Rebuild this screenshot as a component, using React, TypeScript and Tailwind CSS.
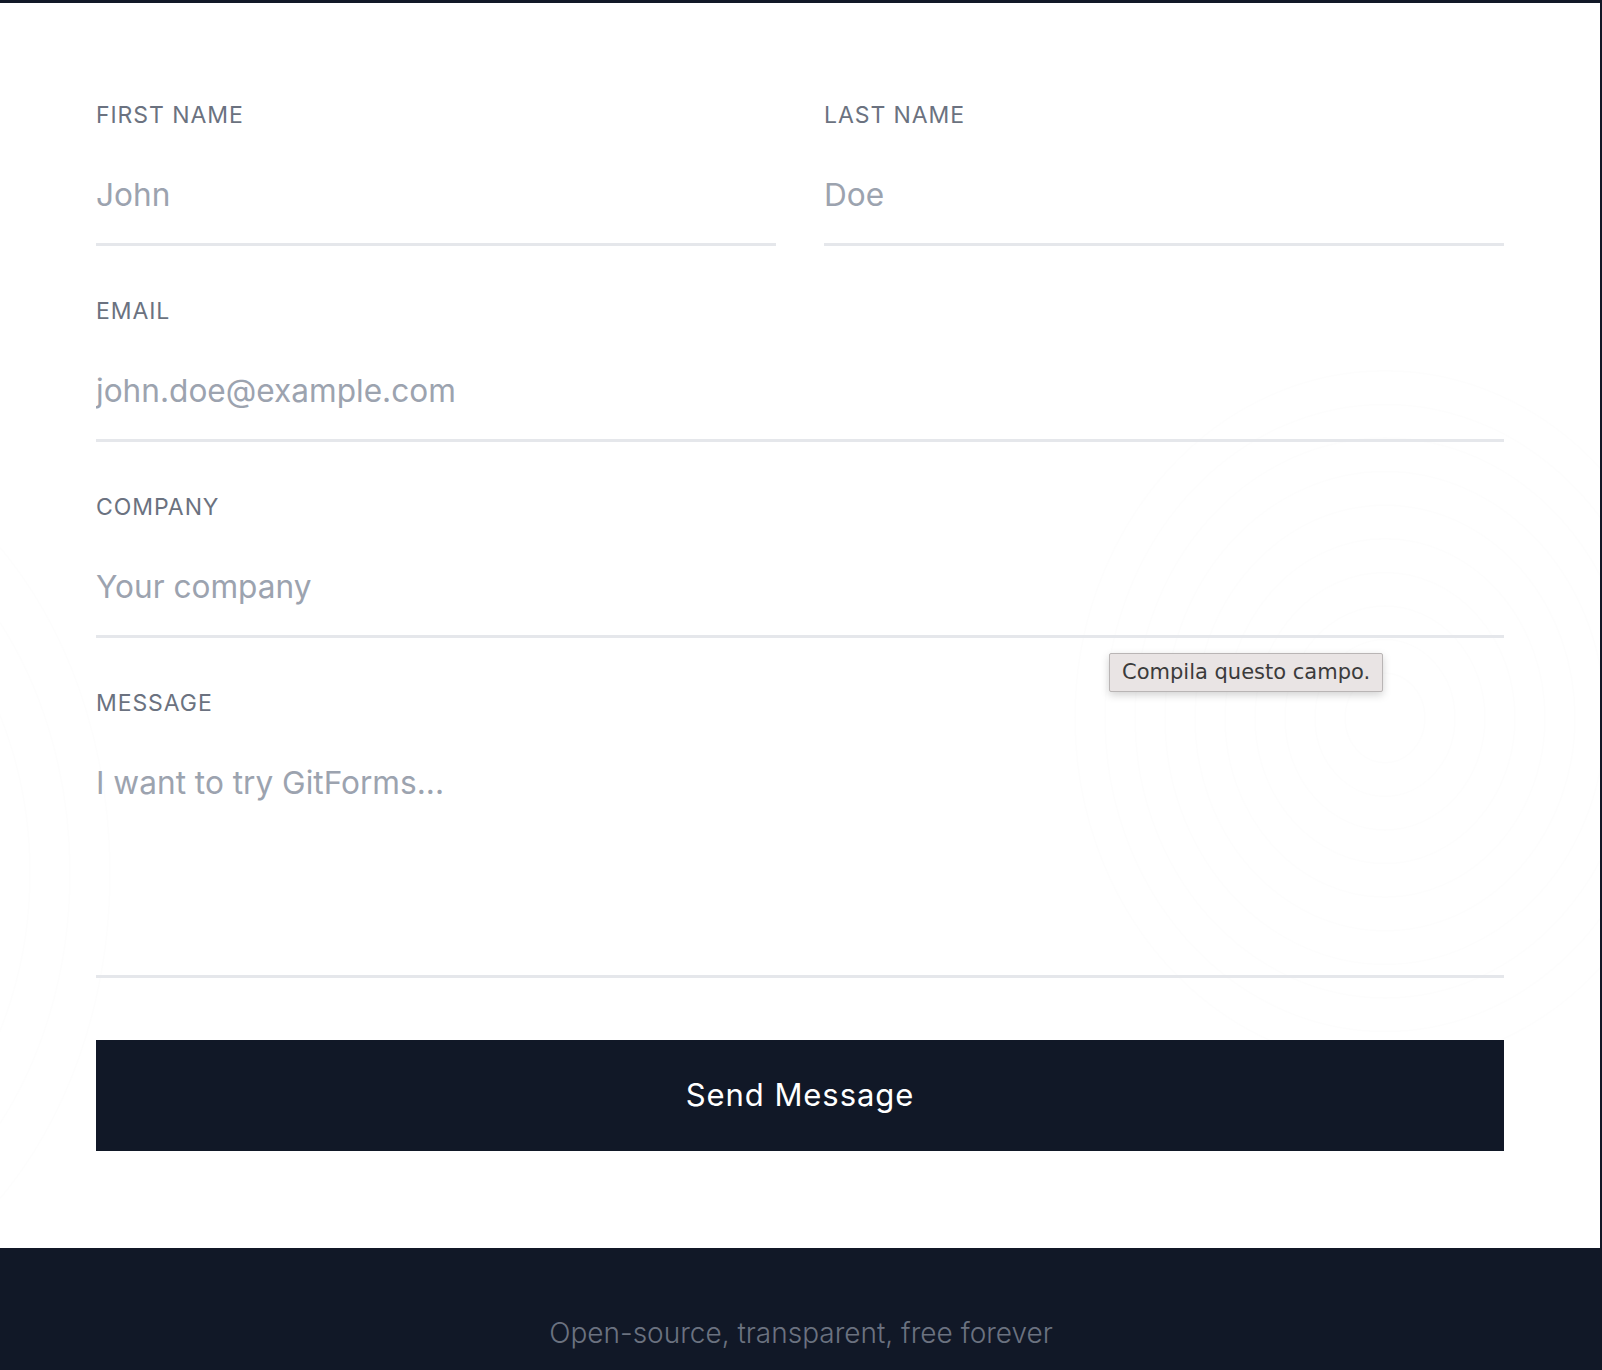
import React from "react";

const inter = { fontFamily: "Inter, 'Noto Sans', sans-serif" };

function Label({ children }: { children: React.ReactNode }) {
  return (
    <label className="block text-[23px] leading-[36px] uppercase tracking-[0.04em] text-[#6b7280]">
      {children}
    </label>
  );
}

function Field({
  label,
  placeholder,
  type = "text",
}: {
  label: string;
  placeholder: string;
  type?: string;
}) {
  return (
    <div>
      <Label>{label}</Label>
      <input
        type={type}
        placeholder={placeholder}
        className="mt-[13px] block h-[100px] w-full border-0 border-b-[3px] border-[#e5e7eb] bg-transparent p-0 text-[31.6px] text-gray-800 outline-none placeholder:text-[#9ca3af]"
      />
    </div>
  );
}

function Rings() {
  const radii = [40, 70, 100, 130, 160, 190, 220, 250, 280, 310];
  return (
    <svg
      className="pointer-events-none absolute inset-0 h-full w-full"
      viewBox="0 0 1600 1245"
      preserveAspectRatio="none"
    >
      <g fill="none" stroke="#000" strokeOpacity="0.007" strokeWidth="2">
        {radii.map((r) => (
          <ellipse key={r} cx={1385} cy={715} rx={r} ry={r * 1.12} />
        ))}
        {[220, 260, 300, 340].map((r) => (
          <ellipse key={"l" + r} cx={-230} cy={870} rx={r} ry={r * 1.3} />
        ))}
      </g>
    </svg>
  );
}

export default function App() {
  return (
    <div className="min-h-screen bg-white" style={inter}>
      <section className="relative border-t-[3px] border-r-2 border-[#111827] bg-white">
        <Rings />
        <form
          className="relative px-[96px] pt-[94px] pb-[97px]"
          onSubmit={(e) => e.preventDefault()}
        >
          <div className="flex flex-col gap-[47px]">
            <div className="grid grid-cols-2 gap-[48px]">
              <Field label="First name" placeholder="John" />
              <Field label="Last name" placeholder="Doe" />
            </div>
            <Field label="Email" placeholder="john.doe@example.com" type="email" />
            <div className="relative">
              <Field label="Company" placeholder="Your company" />
              <div
                className="absolute left-[1013px] top-[164px] z-10 rounded-[2px] border border-[#b9b5b5] bg-[#e9e4e4] px-[12px] py-[5px] text-[21px] leading-[27px] text-[#3b3b3b] shadow-[0_3px_8px_rgba(0,0,0,0.18)]"
                style={{ fontFamily: "'DejaVu Sans', 'Liberation Sans', sans-serif" }}
              >
                Compila questo campo.
              </div>
            </div>
            <div>
              <Label>Message</Label>
              <textarea
                placeholder="I want to try GitForms..."
                className="mt-[13px] block h-[244px] w-full resize-none border-0 border-b-[3px] border-[#e5e7eb] bg-transparent px-0 pt-[23px] pb-0 text-[31.6px] leading-[51px] text-gray-800 outline-none placeholder:text-[#9ca3af]"
              />
            </div>
          </div>
          <button
            type="submit"
            className="mt-[62px] block h-[111px] w-full bg-[#111827] text-[31px] tracking-[0.03em] text-white"
          >
            Send Message
          </button>
        </form>
      </section>
      <footer className="bg-[#111827] pt-[65px] pb-[40px] text-center">
        <p className="text-[28px] leading-[40px] font-light text-[#6b7280]">
          Open-source, transparent, free forever
        </p>
      </footer>
    </div>
  );
}
